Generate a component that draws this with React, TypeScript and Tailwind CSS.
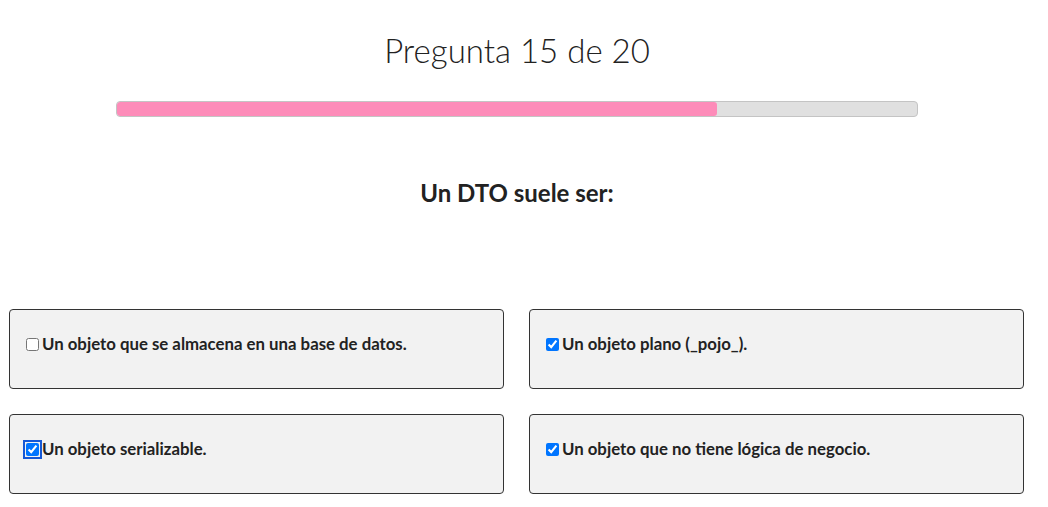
import { useState } from "react";

const options = [
  { text: "Un objeto que se almacena en una base de datos.", checked: false },
  { text: "Un objeto plano (_pojo_).", checked: true },
  { text: "Un objeto serializable.", checked: true, focused: true },
  { text: "Un objeto que no tiene lógica de negocio.", checked: true },
];

export default function App() {
  const [answers, setAnswers] = useState(options.map((o) => o.checked));
  const current = 15;
  const total = 20;

  return (
    <div className="min-h-screen bg-white text-[#222] font-['Lato','Liberation_Sans',sans-serif]">
      <div className="w-[1034px] flex flex-col items-center">
        <h1 className="mt-[28px] h-[44px] leading-[44px] text-[33px] font-light">
          Pregunta {current} de {total}
        </h1>
        <div className="mt-[29px] w-[802px] h-[16px] rounded-[4px] border border-[#c4c4c4] bg-[#e0e0e0] overflow-hidden">
          <div
            className="h-full bg-[#fd8cb9] rounded-[3px]"
            style={{ width: `${(current / total) * 100}%` }}
          />
        </div>
        <h2 className="mt-[62px] text-[24px] leading-[28px] font-bold">Un DTO suele ser:</h2>
      </div>

      <div className="mt-[102px] pl-[9px] pr-[24px] grid grid-cols-2 gap-[25px]">
        {options.map((o, i) => (
          <label
            key={i}
            className="h-[80px] flex items-center pl-[12px] pb-[10px] bg-[#f2f2f2] border border-[#333] rounded-[4px] text-[16.8px] font-bold"
          >
            <input
              type="checkbox"
              checked={answers[i]}
              onChange={() =>
                setAnswers((a) => a.map((v, j) => (j === i ? !v : v)))
              }
              className={
                "w-[13px] h-[13px] ml-[4px] mr-[3px] accent-[#0075ff] " +
                (o.focused ? "outline-2 outline-[#1558d6] outline-offset-[1px] rounded-[2px]" : "")
              }
            />
            {o.text}
          </label>
        ))}
      </div>
    </div>
  );
}
